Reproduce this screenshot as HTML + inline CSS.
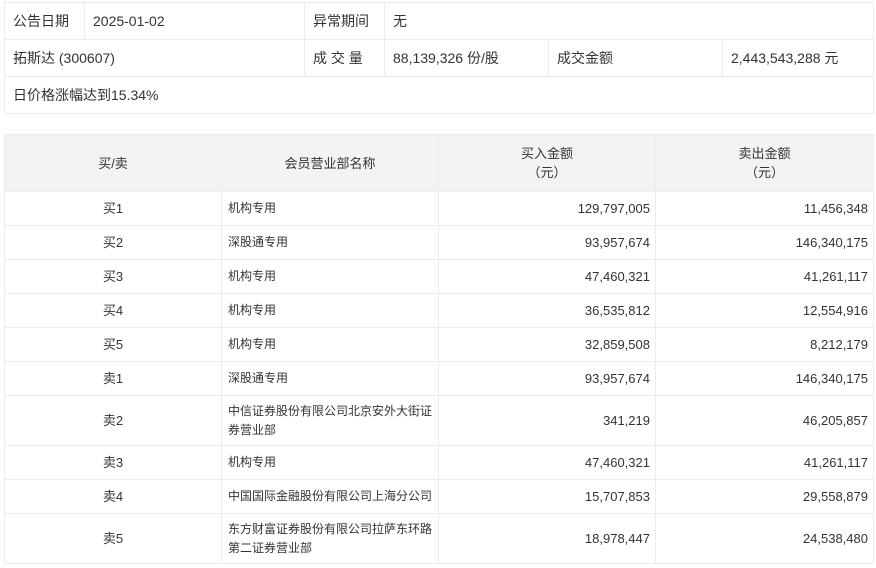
<!DOCTYPE html>
<html><head><meta charset="utf-8"><style>
body{margin:0;background:#fff;font-family:"Liberation Sans","Noto Sans CJK SC",sans-serif;font-size:13px;color:#333;}
table{border-collapse:collapse;position:absolute;left:4px;table-layout:fixed;}
td{border:1px solid #ececec;padding:0 8px;}
#t1{top:2px;width:869px;font-size:14px;}
#t1 td{height:36px;}
#t2{top:134px;width:869px;}
#t2 td{height:33px;line-height:17px;}
#t2 tr.h td{height:56px;background:#f3f3f3;text-align:center;line-height:19px}
#t2 td.c{text-align:center}
#t2 td.r{text-align:right;padding-right:5px}
#t2 td.n{padding-left:6px;padding-right:0;font-size:12px;white-space:nowrap;overflow:visible}
#t2 tr.d td{height:49px;line-height:19px}
</style></head><body>
<table id="t1">
<colgroup><col style="width:80px"><col style="width:220px"><col style="width:80px"><col style="width:164px"><col style="width:174px"><col style="width:151px"></colgroup>
<tr><td>公告日期</td><td>2025-01-02</td><td>异常期间</td><td colspan="3">无</td></tr>
<tr><td colspan="2">拓斯达 (300607)</td><td>成 交 量</td><td>88,139,326 份/股</td><td>成交金额</td><td>2,443,543,288 元</td></tr>
<tr><td colspan="6">日价格涨幅达到15.34%</td></tr>
</table>
<table id="t2">
<colgroup><col style="width:217px"><col style="width:217px"><col style="width:217px"><col style="width:218px"></colgroup>
<tr class="h"><td>买/卖</td><td>会员营业部名称</td><td>买入金额<br>（元）</td><td>卖出金额<br>（元）</td></tr>
<tr><td class="c">买1</td><td class="n">机构专用</td><td class="r">129,797,005</td><td class="r">11,456,348</td></tr>
<tr><td class="c">买2</td><td class="n">深股通专用</td><td class="r">93,957,674</td><td class="r">146,340,175</td></tr>
<tr><td class="c">买3</td><td class="n">机构专用</td><td class="r">47,460,321</td><td class="r">41,261,117</td></tr>
<tr><td class="c">买4</td><td class="n">机构专用</td><td class="r">36,535,812</td><td class="r">12,554,916</td></tr>
<tr><td class="c">买5</td><td class="n">机构专用</td><td class="r">32,859,508</td><td class="r">8,212,179</td></tr>
<tr><td class="c">卖1</td><td class="n">深股通专用</td><td class="r">93,957,674</td><td class="r">146,340,175</td></tr>
<tr class="d"><td class="c">卖2</td><td class="n">中信证券股份有限公司北京安外大街证<br>券营业部</td><td class="r">341,219</td><td class="r">46,205,857</td></tr>
<tr><td class="c">卖3</td><td class="n">机构专用</td><td class="r">47,460,321</td><td class="r">41,261,117</td></tr>
<tr><td class="c">卖4</td><td class="n">中国国际金融股份有限公司上海分公司</td><td class="r">15,707,853</td><td class="r">29,558,879</td></tr>
<tr class="d"><td class="c">卖5</td><td class="n">东方财富证券股份有限公司拉萨东环路<br>第二证券营业部</td><td class="r">18,978,447</td><td class="r">24,538,480</td></tr>
</table>
</body></html>
